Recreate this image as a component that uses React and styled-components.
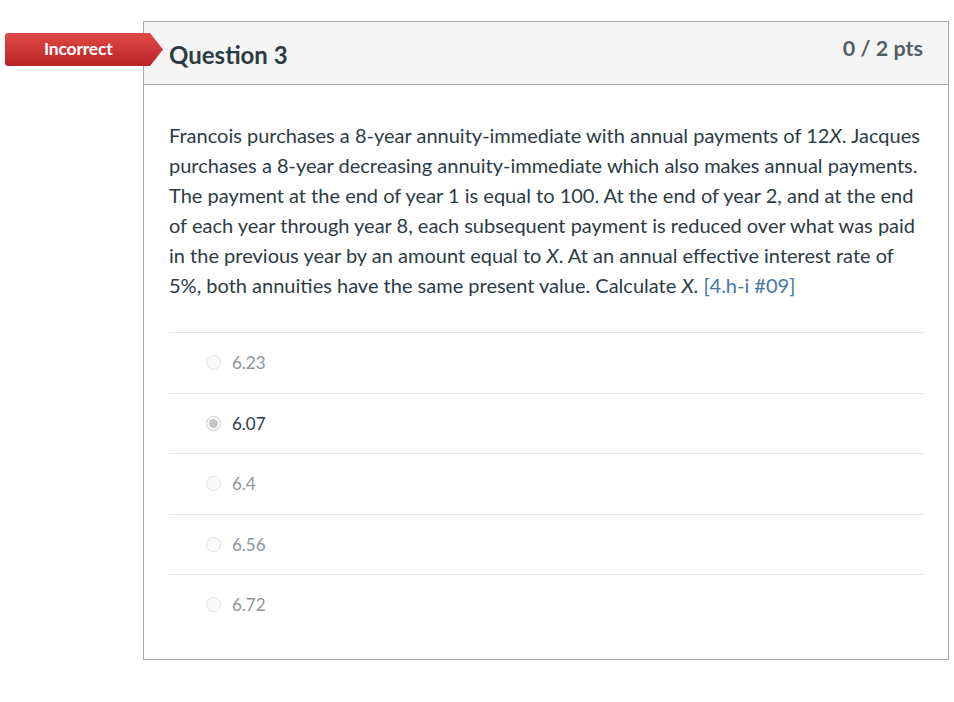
import React from 'react';
import styled, { createGlobalStyle } from 'styled-components';

const GlobalStyle = createGlobalStyle`
  body {
    margin: 0;
    background: #fff;
    font-family: Lato, 'Open Sans', sans-serif;
    color: #2d3b45;
  }
`;

const Page = styled.div`
  position: relative;
  padding: 21px 0 0 143px;
  width: 954px;
  height: 702px;
  box-sizing: border-box;
`;

const Card = styled.div`
  width: 806px;
  border: 1px solid #aaaaaa;
  box-sizing: border-box;
`;

const Header = styled.div`
  display: flex;
  justify-content: space-between;
  align-items: flex-start;
  height: 62px;
  padding: 0 25px;
  background: #f5f5f5;
  border-bottom: 1px solid #aaaaaa;
`;

const Title = styled.h2`
  margin: 0;
  padding-top: 18px;
  font-size: 24px;
  font-weight: 700;
  color: #2d3b45;
  line-height: 30px;
`;

const Points = styled.div`
  padding-top: 12px;
  font-size: 21.5px;
  font-weight: 700;
  color: #555f66;
  line-height: 28px;
`;

const Badge = styled.div`
  position: absolute;
  left: 5px;
  top: 33px;
  width: 158px;
  height: 33px;
  display: flex;
  align-items: center;
  padding: 0 0 2px 39px;
  box-sizing: border-box;
  color: #fff;
  font-size: 17.5px;
  font-weight: 700;
  letter-spacing: -0.2px;
  border-radius: 3px 0 0 3px;
  background: linear-gradient(#e24848, #b92424);
  clip-path: polygon(0 0, 145px 0, 158px 50%, 145px 100%, 0 100%);
`;

const Body = styled.div`
  padding: 35px 25px 24px 25px;
`;

const Text = styled.p`
  margin: 0 0 32px 0;
  font-size: 20px;
  line-height: 30px;
  color: #2d3b45;
`;

const Ref = styled.span`
  color: #4178a8;
`;

const Answers = styled.div``;

const Answer = styled.div`
  display: flex;
  align-items: center;
  height: 60.5px;
  border-top: 1px solid #e5e5e5;
  box-sizing: border-box;
  padding-left: 37px;
  gap: 11px;
  font-size: 17px;
  color: ${p => (p.$selected ? '#2d3b45' : '#8b969e')};
`;

const Radio = styled.span`
  width: 15px;
  height: 15px;
  border-radius: 50%;
  border: 1px solid ${p => (p.$checked ? '#c8c8c8' : '#e0e0e0')};
  box-sizing: border-box;
  background: #fbfbfb;
  display: flex;
  align-items: center;
  justify-content: center;
  &::after {
    content: '';
    display: ${p => (p.$checked ? 'block' : 'none')};
    width: 9px;
    height: 9px;
    border-radius: 50%;
    background: #c4c4c4;
  }
`;

const answers = [
  { v: '6.23' },
  { v: '6.07', selected: true },
  { v: '6.4' },
  { v: '6.56' },
  { v: '6.72' },
];

export default function App() {
  return (
    <>
      <GlobalStyle />
      <Page>
        <Badge>Incorrect</Badge>
        <Card>
          <Header>
            <Title>Question 3</Title>
            <Points>0 / 2 pts</Points>
          </Header>
          <Body>
            <Text>
              Francois purchases a 8-year annuity-immediate with annual payments of 12<i>X</i>. Jacques{' '}
              <br />
              purchases a 8-year decreasing annuity-immediate which also makes annual payments.{' '}
              <br />
              The payment at the end of year 1 is equal to 100. At the end of year 2, and at the end{' '}
              <br />
              of each year through year 8, each subsequent payment is reduced over what was paid{' '}
              <br />
              in the previous year by an amount equal to <i>X</i>. At an annual effective interest rate of{' '}
              <br />
              5%, both annuities have the same present value. Calculate <i>X</i>. <Ref>[4.h-i #09]</Ref>
            </Text>
            <Answers>
              {answers.map(a => (
                <Answer key={a.v} $selected={a.selected}>
                  <Radio $checked={a.selected} />
                  {a.v}
                </Answer>
              ))}
            </Answers>
          </Body>
        </Card>
      </Page>
    </>
  );
}
